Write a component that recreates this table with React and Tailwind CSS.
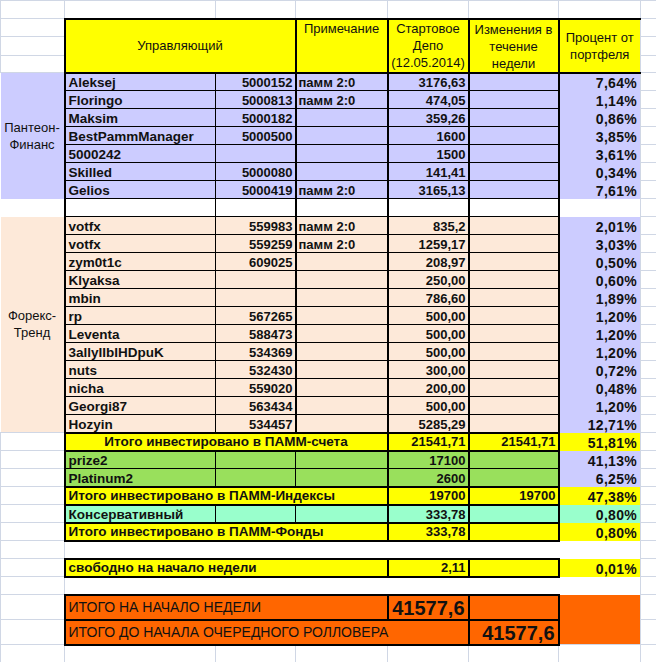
import React from 'react';

// gridline of an empty sheet cell
const grid = 'border border-[#d0d7e5]';

const pantheon = [
  ['Aleksej', '5000152', 'памм 2:0', '3176,63', '7,64%'],
  ['Floringo', '5000813', 'памм 2:0', '474,05', '1,14%'],
  ['Maksim', '5000182', '', '359,26', '0,86%'],
  ['BestPammManager', '5000500', '', '1600', '3,85%'],
  ['5000242', '', '', '1500', '3,61%'],
  ['Skilled', '5000080', '', '141,41', '0,34%'],
  ['Gelios', '5000419', 'памм 2:0', '3165,13', '7,61%'],
];

const forex = [
  ['votfx', '559983', 'памм 2:0', '835,2', '2,01%'],
  ['votfx', '559259', 'памм 2:0', '1259,17', '3,03%'],
  ['zym0t1c', '609025', '', '208,97', '0,50%'],
  ['Klyaksa', '', '', '250,00', '0,60%'],
  ['mbin', '', '', '786,60', '1,89%'],
  ['rp', '567265', '', '500,00', '1,20%'],
  ['Leventa', '588473', '', '500,00', '1,20%'],
  ['3allyIIbIHDpuK', '534369', '', '500,00', '1,20%'],
  ['nuts', '532430', '', '300,00', '0,72%'],
  ['nicha', '559020', '', '200,00', '0,48%'],
  ['Georgi87', '563434', '', '500,00', '1,20%'],
  ['Hozyin', '534457', '', '5285,29', '12,71%'],
];

const pctCls = 'px-[3px] text-right text-[14px] tracking-[0.3px]';

const DataRow = ({ row, bg, label, span }) => (
  <tr className="h-[18px]">
    {label && (
      <td rowSpan={span} className={`${bg} text-center align-middle leading-[17px] font-normal`}>
        {label}
      </td>
    )}
    <td className={`${bg} border-black border-y border-l-2 border-r px-[3px] text-left text-[13.5px]`}>{row[0]}</td>
    <td className={`${bg} border-black border-y border-r-2 px-[2px] text-right`}>{row[1]}</td>
    <td className={`${bg} border-black border-y border-r-2 px-[2px] text-left`}>{row[2]}</td>
    <td className={`${bg} border-black border-y border-r-2 px-[2px] text-right`}>{row[3]}</td>
    <td className={`${bg} border-black border-y border-r-2`}></td>
    <td className={`bg-[#ccccff] ${pctCls}`}>{row[4]}</td>
    <td className={grid}></td>
  </tr>
);

const FundRow = ({ name, value, pct, bg, pctBg }) => (
  <tr className="h-[18px]">
    <td className={grid}></td>
    <td className={`${bg} border-black border-y border-l-2 border-r px-[3px] text-left text-[13.5px]`}>{name}</td>
    <td className={`${bg} border-black border-y border-r`}></td>
    <td className={`${bg} border-black border-y border-r-2`}></td>
    <td className={`${bg} border-black border-y border-r-2 px-[2px] text-right`}>{value}</td>
    <td className={`${bg} border-black border-y border-r-2`}></td>
    <td className={`${pctBg} ${pctCls}`}>{pct}</td>
    <td className={grid}></td>
  </tr>
);

// yellow subtotal rows have a thick frame; the row height is set by the line box
const TotalRow = ({ text, center, value, change, pct }) => (
  <tr className="h-[16px] leading-[16px]">
    <td className={grid}></td>
    <td
      colSpan={3}
      className={`bg-[#ffff00] border-2 border-black px-[3px] text-[13.5px] ${center ? 'text-center' : 'text-left'}`}
    >
      {text}
    </td>
    <td className="bg-[#ffff00] border-2 border-black px-[2px] text-right">{value}</td>
    <td className="bg-[#ffff00] border-2 border-black px-[2px] text-right">{change}</td>
    <td className={`bg-[#ffff00] ${pctCls}`}>{pct}</td>
    <td className={grid}></td>
  </tr>
);

const EmptyRow = ({ sheet }) => (
  <tr className="h-[18px]">
    <td className={grid}></td>
    {[0, 1, 2, 3, 4, 5].map((i) => (
      <td key={i} className={sheet ? grid : ''}></td>
    ))}
    <td className={grid}></td>
  </tr>
);

export default function App() {
  return (
    <div
      className="w-[656px] h-[662px] overflow-hidden bg-white text-[#111] text-[13px] font-bold"
      style={{ fontFamily: '"Liberation Sans", Arial, sans-serif' }}
    >
      <table className="border-collapse table-fixed w-[720px] leading-[15px]">
        <colgroup>
          <col className="w-[64px]" />
          <col className="w-[151px]" />
          <col className="w-[80px]" />
          <col className="w-[92px]" />
          <col className="w-[81px]" />
          <col className="w-[90px]" />
          <col className="w-[82px]" />
          <col className="w-[80px]" />
        </colgroup>
        <tbody className="align-bottom">
          <EmptyRow sheet />

          {/* header */}
          <tr className="h-[18px]">
            <td className={grid}></td>
            <td
              colSpan={2}
              rowSpan={3}
              className="bg-[#ffff00] border-2 border-black text-center align-middle font-normal"
            >
              Управляющий
            </td>
            <td rowSpan={3} className="bg-[#ffff00] border-2 border-black text-center align-top font-normal leading-[17px]">
              Примечание
            </td>
            <td rowSpan={3} className="bg-[#ffff00] border-2 border-black text-center align-top font-normal leading-[17px]">
              Стартовое<br />Депо<br />(12.05.2014)
            </td>
            <td rowSpan={3} className="bg-[#ffff00] border-2 border-black text-center align-top font-normal leading-[17px] pt-px">
              Изменения в<br />течение<br />недели
            </td>
            <td
              rowSpan={3}
              className="bg-[#ffff00] border-y-2 border-l-2 border-black text-center align-middle font-normal leading-[17px]"
            >
              Процент от<br />портфеля
            </td>
            <td className={grid}></td>
          </tr>
          <tr className="h-[18px]">
            <td className={grid}></td>
            <td className={grid}></td>
          </tr>
          <tr className="h-[17px]">
            <td className={grid}></td>
            <td className={grid}></td>
          </tr>

          {pantheon.map((row, i) => (
            <DataRow
              key={'p' + i}
              row={row}
              bg="bg-[#ccccff]"
              label={i === 0 ? <>Пантеон-<br />Финанс</> : null}
              span={pantheon.length}
            />
          ))}

          {/* spacer inside the table */}
          <tr className="h-[18px]">
            <td></td>
            <td className="border-black border-y border-l-2 border-r"></td>
            <td className="border-black border-y border-r-2"></td>
            <td className="border-black border-y border-r-2"></td>
            <td className="border-black border-y border-r-2"></td>
            <td className="border-black border-y border-r-2"></td>
            <td></td>
            <td className={grid}></td>
          </tr>

          {forex.map((row, i) => (
            <DataRow
              key={'f' + i}
              row={row}
              bg="bg-[#fde9d9]"
              label={i === 0 ? <>Форекс-<br />Тренд</> : null}
              span={forex.length}
            />
          ))}

          <TotalRow text="Итого инвестировано в ПАММ-счета" center value="21541,71" change="21541,71" pct="51,81%" />
          <FundRow name="prize2" value="17100" pct="41,13%" bg="bg-[#99e05c]" pctBg="bg-[#ccccff]" />
          <FundRow name="Platinum2" value="2600" pct="6,25%" bg="bg-[#99e05c]" pctBg="bg-[#ccccff]" />
          <TotalRow text="Итого инвестировано в ПАММ-Индексы" value="19700" change="19700" pct="47,38%" />
          <FundRow name="Консервативный" value="333,78" pct="0,80%" bg="bg-[#99ffcc]" pctBg="bg-[#99ffcc]" />
          <TotalRow text="Итого инвестировано в ПАММ-Фонды" value="333,78" change="" pct="0,80%" />

          <EmptyRow />
          <TotalRow text="свободно на начало недели" value="2,11" change="" pct="0,01%" />
          <EmptyRow />

          {/* final totals */}
          <tr className="h-[25px]">
            <td className={grid}></td>
            <td colSpan={3} className="bg-[#ff6600] border-2 border-black px-[3px] text-left align-middle font-normal text-[14px]">
              ИТОГО НА НАЧАЛО НЕДЕЛИ
            </td>
            <td className="bg-[#ff6600] border-2 border-black px-[3px] text-right text-[20px] leading-[22px]">
              41577,6
            </td>
            <td className="bg-[#ff6600] border-2 border-black"></td>
            <td rowSpan={2} className="bg-[#ff6600]"></td>
            <td className={grid}></td>
          </tr>
          <tr className="h-[25px]">
            <td className={grid}></td>
            <td colSpan={4} className="bg-[#ff6600] border-2 border-black px-[3px] text-left align-middle font-normal text-[14px]">
              ИТОГО ДО НАЧАЛА ОЧЕРЕДНОГО РОЛЛОВЕРА
            </td>
            <td className="bg-[#ff6600] border-2 border-black px-[3px] text-right text-[20px] leading-[22px]">
              41577,6
            </td>
            <td className={grid}></td>
          </tr>
          <EmptyRow sheet />
          <EmptyRow sheet />
        </tbody>
      </table>
    </div>
  );
}
